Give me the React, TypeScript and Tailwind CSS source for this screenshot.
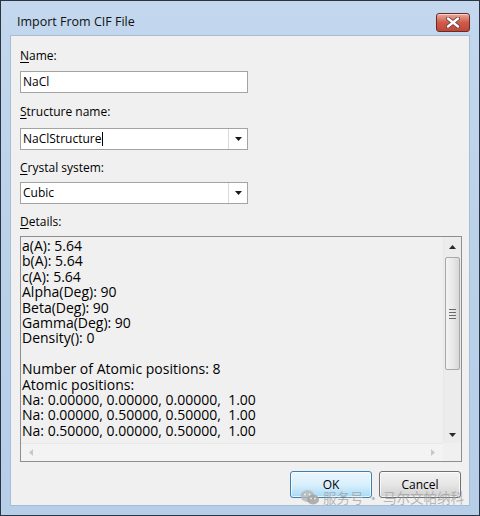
import React from 'react';

const DETAILS = [
  'a(A): 5.64',
  'b(A): 5.64',
  'c(A): 5.64',
  'Alpha(Deg): 90',
  'Beta(Deg): 90',
  'Gamma(Deg): 90',
  'Density(): 0',
  '',
  'Number of Atomic positions: 8',
  'Atomic positions:',
  'Na: 0.00000, 0.00000, 0.00000,  1.00',
  'Na: 0.00000, 0.50000, 0.50000,  1.00',
  'Na: 0.50000, 0.00000, 0.50000,  1.00',
];

function Label({ mark, rest, className = '' }: { mark: string; rest: string; className?: string }) {
  return (
    <div className={`h-[16px] leading-[16px] text-[12px] text-black ${className}`}>
      <span className="underline underline-offset-[2px] decoration-[1px]">{mark}</span>
      {rest}
    </div>
  );
}

function Combo({ value, caret }: { value: string; caret?: boolean }) {
  return (
    <div className="flex h-[22px] w-[228px] border border-[#a3a3a3] bg-white">
      <div className="flex flex-1 items-center pl-[2px] text-[12px] text-black">
        {value}
        {caret && <span className="ml-[1px] inline-block h-[14px] w-[1px] bg-black" />}
      </div>
      <div className="flex w-[19px] items-center justify-center border-l border-[#dadada]">
        <svg width="7" height="4" viewBox="0 0 7 4">
          <path d="M0 0h7L3.5 4z" fill="#1a1a1a" />
        </svg>
      </div>
    </div>
  );
}

function CloseButton() {
  return (
    <div className="flex h-[19px] w-[34px] items-center justify-center rounded-[3px] border border-[#6b2a24] bg-gradient-to-b from-[#e9a99b] via-[#cf5a4a] to-[#c0473a] shadow-[inset_0_1px_0_rgba(255,255,255,0.5)]">
      <svg width="14" height="11" viewBox="0 0 14 11">
        <path d="M2 1.5l10 8M12 1.5l-10 8" stroke="#5a3b38" strokeWidth="4" strokeLinecap="round" />
        <path d="M2 1.5l10 8M12 1.5l-10 8" stroke="#ffffff" strokeWidth="2.4" strokeLinecap="round" />
      </svg>
    </div>
  );
}

function VScroll() {
  return (
    <div className="flex w-[18px] flex-col border-l border-[#e8e8e8] bg-[#ececec]">
      <div className="flex h-[19px] items-center justify-center">
        <svg width="7" height="4" viewBox="0 0 7 4">
          <path d="M3.5 0L7 4H0z" fill="#2a2a2a" />
        </svg>
      </div>
      <div className="mx-[1px] mt-[1px] flex h-[113px] flex-col items-center justify-center rounded-[2px] border border-[#a8a8a8] bg-gradient-to-r from-[#f3f3f3] via-[#e9e9e9] to-[#d8d8d8]">
        <div className="flex flex-col gap-[2px]">
          <div className="h-[1px] w-[7px] bg-[#6a6a6a]" />
          <div className="h-[1px] w-[7px] bg-[#6a6a6a]" />
          <div className="h-[1px] w-[7px] bg-[#6a6a6a]" />
          <div className="h-[1px] w-[7px] bg-[#6a6a6a]" />
        </div>
      </div>
      <div className="flex-1" />
      <div className="flex h-[17px] items-center justify-center">
        <svg width="7" height="4" viewBox="0 0 7 4">
          <path d="M0 0h7L3.5 4z" fill="#2a2a2a" />
        </svg>
      </div>
    </div>
  );
}

export default function App() {
  return (
    <div className="relative flex h-[516px] w-[480px] flex-col border border-[#2b3440] bg-gradient-to-b from-[#c3d8ee] via-[#bad1ea] to-[#b6cee8] font-['Segoe_UI','Open_Sans',sans-serif]">
      {/* title bar */}
      <div className="flex h-[34px] items-start justify-between pl-[16px] pr-[9px]">
        <div className="mt-[13px] text-[12.5px] leading-[16px] text-[#111]">Import From CIF File</div>
        <div className="mt-[12px]">
          <CloseButton />
        </div>
      </div>

      {/* client area */}
      <div className="mx-[9px] mb-[9px] flex flex-1 flex-col border border-[#a7bdd4] bg-[#f0f0f0] pl-[9px] pr-[8px] pt-[12px]">
        <Label mark="N" rest="ame:" />
        <div className="mt-[7px] flex h-[22px] w-[228px] items-center border border-[#a3a3a3] bg-white pl-[2px] text-[12px] text-black">
          NaCl
        </div>

        <Label mark="S" rest="tructure name:" className="mt-[11px]" />
        <div className="mt-[8px]">
          <Combo value="NaClStructure" caret />
        </div>

        <Label mark="C" rest="rystal system:" className="mt-[10px]" />
        <div className="mt-[6px]">
          <Combo value="Cubic" />
        </div>

        <Label mark="D" rest="etails:" className="mt-[10px]" />
        <div className="mt-[6px] flex h-[226px] w-[442px] flex-col border border-[#8e8e8e] bg-[#f0f0f0]">
          <div className="flex min-h-0 flex-1">
            <div className="flex-1 overflow-hidden whitespace-pre pl-[1px] pt-[1px] text-[14px] leading-[15.4px] text-black">
              {DETAILS.map((line, i) => (
                <div key={i} className="h-[15.4px]">
                  {line}
                </div>
              ))}
            </div>
            <VScroll />
          </div>
          <div className="flex h-[18px]">
            <div className="flex flex-1 items-center justify-between border-t border-[#e8e8e8] bg-[#f3f3f3] px-[8px]">
              <svg width="4" height="7" viewBox="0 0 4 7">
                <path d="M4 0v7L0 3.5z" fill="#c8c8c8" />
              </svg>
              <svg width="4" height="7" viewBox="0 0 4 7">
                <path d="M0 0v7l4-3.5z" fill="#c8c8c8" />
              </svg>
            </div>
            <div className="w-[18px] bg-[#f0f0f0]" />
          </div>
        </div>

        <div className="mt-[9px] flex justify-end gap-[7px]">
          <button className="h-[27px] w-[82px] rounded-[3px] border border-[#3c7fb1] bg-gradient-to-b from-[#eaf6fd] via-[#d9f0fc] to-[#a7d9f5] text-[12px] text-black shadow-[inset_0_0_0_1px_rgba(255,255,255,0.7)]">
            OK
          </button>
          <button className="h-[27px] w-[82px] rounded-[3px] border border-[#707070] bg-gradient-to-b from-[#f2f2f2] via-[#e6e6e6] to-[#cfcfcf] text-[12px] text-black shadow-[inset_0_0_0_1px_rgba(255,255,255,0.7)]">
            Cancel
          </button>
        </div>
      </div>

      {/* watermark */}
      <div className="pointer-events-none absolute left-[299px] top-[486px] flex items-center gap-[3px] whitespace-nowrap text-[13.5px] leading-[20px] text-[#a0a0a0]/75 font-['Noto_Sans_CJK_SC',sans-serif]">
        <svg width="20" height="17" viewBox="0 0 20 17">
          <ellipse cx="7.5" cy="7" rx="7" ry="6" fill="#b5b5b5" fillOpacity="0.8" />
          <ellipse cx="13" cy="10.5" rx="6" ry="5" fill="#a5a5a5" fillOpacity="0.85" />
          <circle cx="5" cy="5.5" r="1" fill="#eee" />
          <circle cx="9.5" cy="5.5" r="1" fill="#eee" />
          <circle cx="11" cy="9.5" r="0.9" fill="#eee" />
          <circle cx="15" cy="9.5" r="0.9" fill="#eee" />
        </svg>
        <span>服务号 · 马尔文帕纳科</span>
      </div>
    </div>
  );
}
